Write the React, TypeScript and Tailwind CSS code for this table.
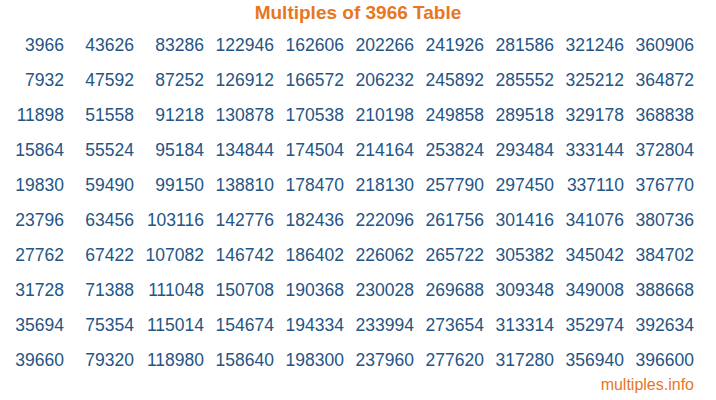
import React from "react";

const BASE = 3966;
const rows = Array.from({ length: 10 }, (_, r) =>
  Array.from({ length: 10 }, (_, c) => BASE * (c * 10 + r + 1))
);

export default function App() {
  return (
    <div className="w-[716px] h-[400px] bg-white font-['Liberation_Sans',Arial,sans-serif] overflow-hidden">
      <h1 className="text-center text-[19px] leading-[26px] font-bold text-[#e8761e]">
        Multiples of {BASE} Table
      </h1>
      <div className="pt-[1px] pl-[4px]">
        {rows.map((row, i) => (
          <div key={i} className="grid grid-cols-[repeat(10,60px)] gap-x-[10px] h-[35px] items-center">
            {row.map((n) => (
              <div key={n} className="text-right text-[17.5px] leading-[20px] text-[#245585]">
                {n}
              </div>
            ))}
          </div>
        ))}
      </div>
      <div className="text-right pr-[22px] -mt-[1px] text-[16px] leading-[18px] text-[#e8761e]">
        multiples.info
      </div>
    </div>
  );
}
